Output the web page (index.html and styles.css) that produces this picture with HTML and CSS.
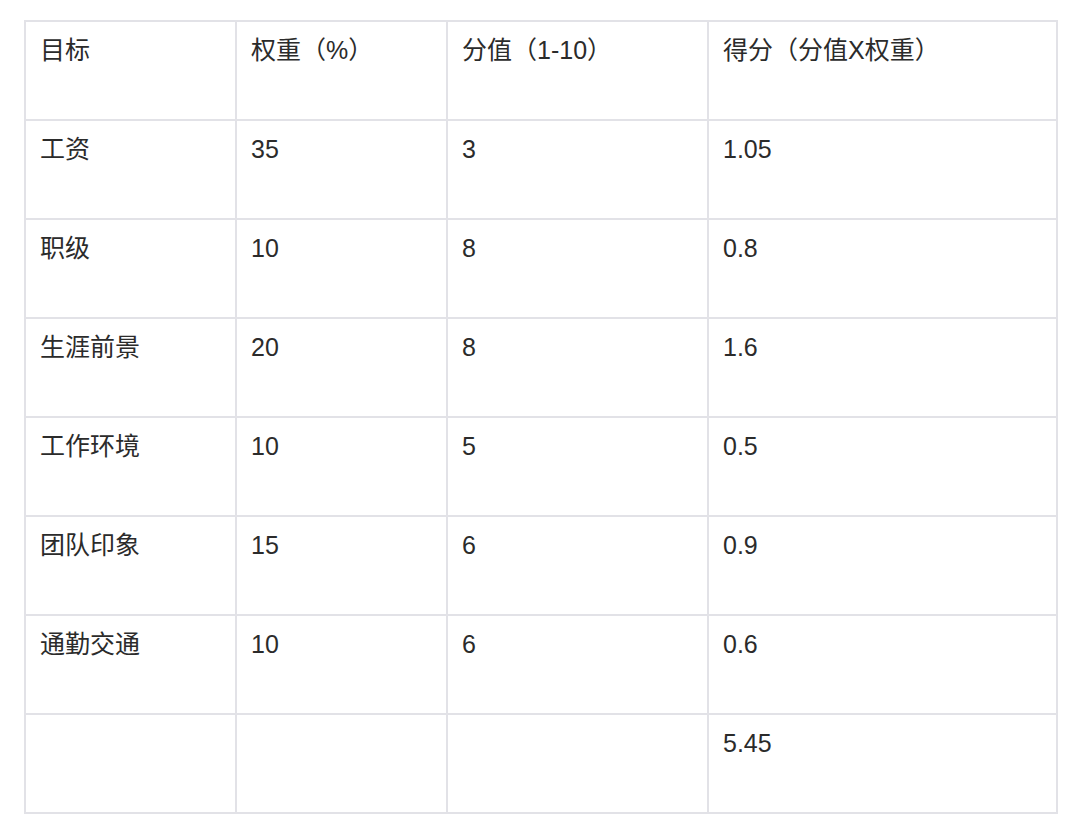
FILE: index.html
```html
<!DOCTYPE html>
<html lang="zh">
<head>
<meta charset="utf-8">
<link rel="stylesheet" href="styles.css">
</head>
<body>
<table class="score">
  <colgroup>
    <col class="c1"><col class="c2"><col class="c3"><col class="c4">
  </colgroup>
  <tbody>
    <tr><td>目标</td><td>权重（%）</td><td>分值（1-10）</td><td>得分（分值X权重）</td></tr>
    <tr><td>工资</td><td>35</td><td>3</td><td>1.05</td></tr>
    <tr><td>职级</td><td>10</td><td>8</td><td>0.8</td></tr>
    <tr><td>生涯前景</td><td>20</td><td>8</td><td>1.6</td></tr>
    <tr><td>工作环境</td><td>10</td><td>5</td><td>0.5</td></tr>
    <tr><td>团队印象</td><td>15</td><td>6</td><td>0.9</td></tr>
    <tr><td>通勤交通</td><td>10</td><td>6</td><td>0.6</td></tr>
    <tr><td></td><td></td><td></td><td>5.45</td></tr>
  </tbody>
</table>
</body>
</html>
```

FILE: styles.css
```css
html, body {
  margin: 0;
  padding: 0;
  background: #ffffff;
}
body {
  padding: 20px 0 0 24px;
  font-family: "Liberation Sans", "Noto Sans CJK SC", sans-serif;
  color: #2b2b2b;
}
.score {
  border-collapse: collapse;
  table-layout: fixed;
  width: 1032px;
}
.c1 { width: 211px; }
.c2 { width: 211px; }
.c3 { width: 261px; }
.c4 { width: 349px; }
.score td {
  border: 2px solid #e2e2e7;
  height: 99px;
  box-sizing: border-box;
  vertical-align: top;
  padding: 9px 14px;
  font-size: 25px;
  line-height: 38px;
}
```
